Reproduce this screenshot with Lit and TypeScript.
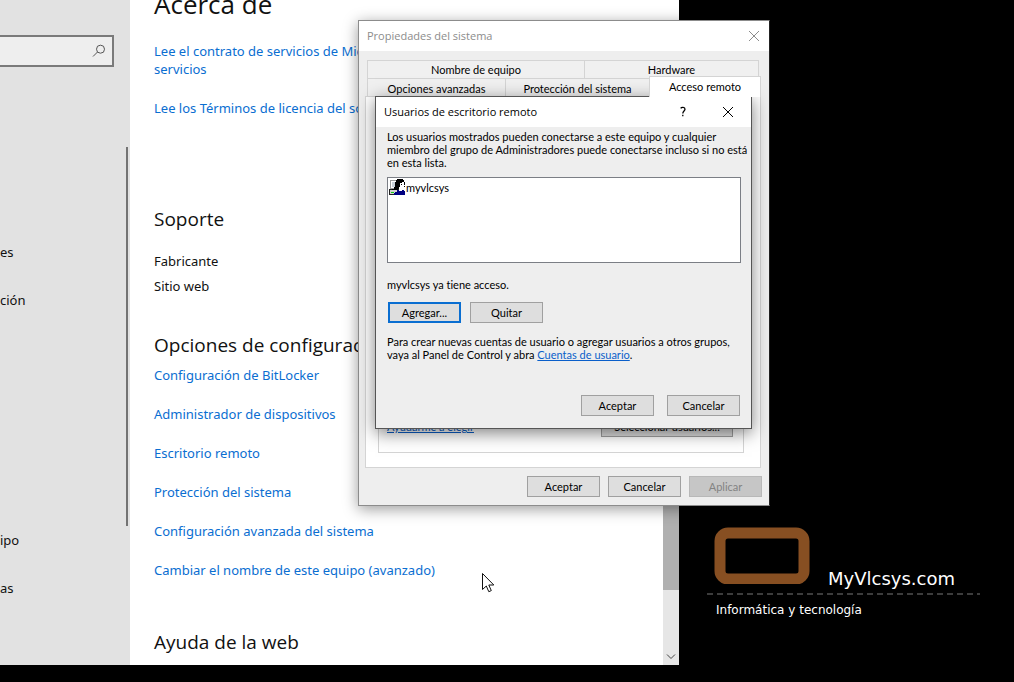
import { LitElement, html, css } from "lit";
import { customElement } from "lit/decorators.js";

const settingLinks = [
  "Configuración de BitLocker",
  "Administrador de dispositivos",
  "Escritorio remoto",
  "Protección del sistema",
  "Configuración avanzada del sistema",
  "Cambiar el nombre de este equipo (avanzado)",
];

@customElement("settings-window")
class SettingsWindow extends LitElement {
  static styles = css`
    :host {
      display: grid;
      grid-template-columns: 130px 1fr 16px;
      overflow: hidden;
      background: #fff;
      color: #111;
      font: 13px/18px "Noto Sans", "Open Sans", sans-serif;
    }
    .side {
      display: flex;
      flex-direction: column;
      position: relative;
      background: #e2e2e2;
      padding-top: 51px;
    }
    .search {
      display: flex;
      align-items: center;
      box-sizing: border-box;
      height: 32px;
      margin-right: 16px;
      border: 2px solid #7a7a7a;
      border-left: 0;
      background: #eee;
    }
    .search input {
      flex: 1;
      min-width: 0;
      border: 0;
      outline: 0;
      background: transparent;
    }
    .search svg {
      margin-right: 6px;
    }
    .nav {
      display: flex;
      flex-direction: column;
      gap: 30px;
      margin-top: 176px;
    }
    .nav + .nav {
      margin-top: 222px;
    }
    .nav a {
      color: #111;
      text-decoration: none;
    }
    .thumb {
      position: absolute;
      right: 2px;
      top: 163px;
      width: 2px;
      height: 379px;
      background: #737373;
    }
    .main {
      padding-left: 24px;
      white-space: nowrap;
      overflow: hidden;
    }
    .main a {
      color: #0a6ed1;
      text-decoration: none;
    }
    h1 {
      margin: 0 0 18px;
      font: 400 26px/40px "Open Sans", "Noto Sans", sans-serif;
    }
    h2 {
      margin: 0;
      font: 400 19px/28px "Open Sans", "Noto Sans", sans-serif;
    }
    .legal {
      display: flex;
      flex-direction: column;
      align-items: start;
      gap: 21px;
      margin-bottom: 88px;
    }
    .facts {
      display: flex;
      flex-direction: column;
      gap: 7px;
      margin: 19px 0 36px;
    }
    .links {
      display: flex;
      flex-direction: column;
      align-items: start;
      gap: 21px;
      margin: 7px 0 49px;
    }
    .bar {
      display: flex;
      flex-direction: column;
      justify-content: flex-end;
      background: #e6e6e6;
    }
    .bar .grip {
      height: 200px;
      background: #b0b0b0;
    }
    .bar .down {
      height: 75px;
      display: flex;
      align-items: flex-end;
      justify-content: center;
    }
    .track {
      flex: 1;
      background: #fff;
    }
  `;
  render() {
    return html`
      <nav class="side">
        <label class="search">
          <input type="search" aria-label="Buscar" />
          <svg width="14" height="14" viewBox="0 0 14 14" fill="none" stroke="#555" stroke-width="1">
            <circle cx="8.5" cy="5.2" r="4" />
            <path d="M5.5 8 L1 12.5" />
          </svg>
        </label>
        <div class="nav"><a href="#">es</a><a href="#">ción</a></div>
        <div class="nav"><a href="#">ipo</a><a href="#">as</a></div>
        <div class="thumb"></div>
      </nav>
      <main class="main">
        <h1>Acerca de</h1>
        <div class="legal">
          <a href="#">Lee el contrato de servicios de Microsoft<br />servicios</a>
          <a href="#">Lee los Términos de licencia del software</a>
        </div>
        <h2>Soporte</h2>
        <div class="facts"><span>Fabricante</span><span>Sitio web</span></div>
        <h2>Opciones de configuración</h2>
        <div class="links">${settingLinks.map((t) => html`<a href="#">${t}</a>`)}</div>
        <h2>Ayuda de la web</h2>
      </main>
      <div class="bar">
        <div class="track"></div>
        <div class="grip"></div>
        <div class="down">
          <svg width="10" height="16" viewBox="0 0 10 16" fill="none" stroke="#444"><path d="M1 5.5 L5 9.5 L9 5.5" /></svg>
        </div>
      </div>
    `;
  }
}

const dialogStyles = css`
  :host {
    display: flex;
    flex-direction: column;
    box-sizing: border-box;
    background: #eee;
    color: #000;
    font: 11px/13px Lato, "Liberation Sans", Arial, sans-serif;
    font-variant-ligatures: none;
    white-space: nowrap;
  }
  header {
    display: flex;
    align-items: center;
    box-sizing: border-box;
    height: 30px;
    flex: none;
    background: #fff;
    font: 11px/16px "Open Sans", "Noto Sans", sans-serif;
    padding: 0 9px 0 8px;
  }
  header .title {
    flex: 1;
  }
  header button {
    display: flex;
    justify-content: center;
    align-items: center;
    padding: 0;
    border: 0;
    background: none;
    color: inherit;
    font: inherit;
  }
  .btn {
    box-sizing: border-box;
    width: 73px;
    height: 21px;
    padding: 0;
    border: 1px solid #a0a0a0;
    background: #dedede;
    color: #000;
    font: inherit;
    font-variant-ligatures: none;
  }
  .btn.default {
    border: 2px solid #0a6ed1;
  }
  .btn:disabled {
    background: #c6c6c6;
    border-color: #b8b8b8;
    color: #838383;
  }
  a {
    color: #0a5fca;
  }
`;

@customElement("system-properties")
class SystemProperties extends LitElement {
  static styles = [
    dialogStyles,
    css`
      header {
        color: #8c8c8c;
      }
      .tabs {
        display: grid;
        grid-template-columns: 138fr 144fr 110fr;
        height: 18px;
        margin: 0 10px 0 8px;
      }
      .tabs.first {
        grid-template-columns: 217fr 175fr;
        margin-top: 9px;
      }
      .tab {
        box-sizing: border-box;
        padding: 0;
        border: 1px solid #d4d4d4;
        border-width: 1px 0 0 1px;
        background: #f0f0f0;
        font: inherit;
        color: inherit;
      }
      .first .tab:last-child {
        border-right-width: 1px;
      }
      .tab.selected {
        height: 21px;
        margin: -2px -2px 0 0;
        padding-bottom: 2px;
        background: #fff;
        border-right-width: 1px;
        z-index: 1;
      }
      .panel {
        box-sizing: border-box;
        display: flex;
        flex-direction: column;
        flex: 1;
        margin: 0 8px 0 6px;
        padding: 12px 16px 14px 12px;
        border: 1px solid #d4d4d4;
        background: #fff;
      }
      .group {
        display: flex;
        flex: 1;
        align-items: flex-end;
        justify-content: space-between;
        padding: 0 10px 15px 8px;
        border: 1px solid #d4d4d4;
      }
      .group a {
        margin-bottom: 4px;
      }
      .group .btn {
        width: 132px;
      }
      .actions {
        display: flex;
        justify-content: flex-end;
        gap: 8px;
        padding: 8px 7px;
      }
    `,
  ];
  render() {
    return html`
      <header>
        <span class="title">Propiedades del sistema</span>
        <button aria-label="Cerrar">
          <svg width="12" height="12" viewBox="0 0 12 12" stroke="#8c8c8c"><path d="M1 1 L11 11 M11 1 L1 11" /></svg>
        </button>
      </header>
      <div class="tabs first" role="tablist">
        <button class="tab" role="tab">Nombre de equipo</button>
        <button class="tab" role="tab">Hardware</button>
      </div>
      <div class="tabs" role="tablist">
        <button class="tab" role="tab">Opciones avanzadas</button>
        <button class="tab" role="tab">Protección del sistema</button>
        <button class="tab selected" role="tab" aria-selected="true">Acceso remoto</button>
      </div>
      <div class="panel">
        <div class="group">
          <a href="#">Ayudarme a elegir</a>
          <button class="btn">Seleccionar usuarios...</button>
        </div>
      </div>
      <div class="actions">
        <button class="btn">Aceptar</button>
        <button class="btn">Cancelar</button>
        <button class="btn" disabled>Aplicar</button>
      </div>
    `;
  }
}

@customElement("remote-users")
class RemoteUsers extends LitElement {
  static styles = [
    dialogStyles,
    css`
      header {
        gap: 35px;
        padding-right: 17px;
      }
      .body {
        display: flex;
        flex-direction: column;
        flex: 1;
        padding: 3px 10px 12px 11px;
      }
      p {
        margin: 0;
      }
      ul {
        box-sizing: border-box;
        height: 86px;
        margin: 8px 0 15px;
        padding: 1px;
        border: 1px solid #7b7e85;
        background: #fff;
        list-style: none;
      }
      li {
        display: flex;
        align-items: center;
        gap: 1px;
      }
      .row {
        display: flex;
        gap: 9px;
        margin: 11px 0 12px 1px;
      }
      .actions {
        display: flex;
        justify-content: flex-end;
        gap: 13px;
        margin-top: auto;
        padding-right: 1px;
      }
    `,
  ];
  render() {
    return html`
      <header>
        <span class="title">Usuarios de escritorio remoto</span>
        <button aria-label="Ayuda">
          <svg width="8" height="12" viewBox="0 0 8 12" fill="none" stroke="#000" stroke-width="1.3">
            <path d="M1.7 2.4 C2.4 1 6 .9 6 3.2 C6 5 3.8 5 3.8 7.4 M3.8 8.8 V10.3" />
          </svg>
        </button>
        <button aria-label="Cerrar">
          <svg width="12" height="12" viewBox="0 0 12 12" stroke="#000" stroke-width="1"><path d="M1 1 L11 11 M11 1 L1 11" /></svg>
        </button>
      </header>
      <div class="body">
        <p>
          Los usuarios mostrados pueden conectarse a este equipo y cualquier<br />
          miembro del grupo de Administradores puede conectarse incluso si no está<br />
          en esta lista.
        </p>
        <ul>
          <li>
            <svg width="16" height="16" viewBox="0 0 16 16" shape-rendering="crispEdges">
              <path d="M1 1 H9 V10 H1 Z" fill="#999" />
              <path d="M2 2 H8 V9 H2 Z" fill="#fff" />
              <path d="M3 3 H8 V8 H3 Z" fill="#c8d0d8" />
              <path d="M0 10 H10 V16 H0 Z" fill="#222" />
              <path d="M1 11 H9 V15 H1 Z" fill="#d0d0d0" />
              <path d="M2 13 H5 V14 H2 Z" fill="#10d010" />
              <path d="M8 0 H14 V1 H15 V3 H16 V8 H12 V10 H9 V11 H3 V10 H5 V8 H6 V3 H7 V1 H8 Z" fill="#000" />
              <path d="M11 4 H13 V3 H15 V6 H16 V7 H15 V10 H13 V11 H10 V8 H11 Z" fill="#fff" />
              <path d="M12 5 H13 V6 H12 Z" fill="#000" />
              <path d="M6 13 H8 V11 H10 V12 H13 V11 H15 V12 H16 V16 H5 V14 H6 Z" fill="#000080" />
            </svg>
            <span>myvlcsys</span>
          </li>
        </ul>
        <p>myvlcsys ya tiene acceso.</p>
        <div class="row">
          <button class="btn default">Agregar...</button>
          <button class="btn">Quitar</button>
        </div>
        <p>
          Para crear nuevas cuentas de usuario o agregar usuarios a otros grupos,<br />
          vaya al Panel de Control y abra <a href="#">Cuentas de usuario</a>.
        </p>
        <div class="actions">
          <button class="btn">Aceptar</button>
          <button class="btn">Cancelar</button>
        </div>
      </div>
    `;
  }
}

@customElement("app-root")
class AppRoot extends LitElement {
  static styles = css`
    :host {
      display: block;
      position: relative;
      height: 100vh;
      overflow: hidden;
      background: #000;
    }
    .settings {
      position: absolute;
      left: 0;
      top: -16px;
      bottom: 17px;
      width: 679px;
    }
    .properties {
      position: absolute;
      left: 358px;
      top: 20px;
      width: 412px;
      height: 486px;
      border: 1px solid #8c8c8c;
      border-right-color: #222;
      box-shadow: 0 3px 14px rgba(0, 0, 0, 0.4);
    }
    .users {
      position: absolute;
      left: 375px;
      top: 96px;
      width: 377px;
      height: 333px;
      border: 1px solid #555;
      box-shadow: 0 4px 16px rgba(0, 0, 0, 0.5);
    }
    .brand {
      position: absolute;
      left: 707px;
      top: 527px;
      width: 273px;
      color: #fff;
      font: 12px/14px "DejaVu Sans", Verdana, sans-serif;
    }
    .logo {
      display: flex;
      align-items: flex-end;
      gap: 18px;
      padding: 0 0 9px 7px;
    }
    .name {
      font-size: 18px;
      line-height: 20px;
      margin-bottom: -5px;
    }
    .dash {
      display: block;
    }
    .tag {
      margin: 8px 0 0 9px;
    }
    .cursor {
      position: absolute;
      left: 482px;
      top: 573px;
    }
  `;
  render() {
    return html`
      <div class="brand">
        <div class="logo">
          <svg width="96" height="57" viewBox="0 0 96 57">
            <rect x="6" y="6" width="84" height="46" rx="8" fill="none" stroke="#874f22" stroke-width="11" />
          </svg>
          <span class="name">MyVlcsys.com</span>
        </div>
        <svg class="dash" width="100%" height="2"><path d="M0 1 H273" stroke="#3c3c3c" stroke-width="2" stroke-dasharray="6 4" /></svg>
        <div class="tag">Informática y tecnología</div>
      </div>
      <settings-window class="settings"></settings-window>
      <system-properties class="properties"></system-properties>
      <remote-users class="users"></remote-users>
      <svg class="cursor" width="13" height="20" viewBox="0 0 13 20">
        <path d="M.5 .5 V16.5 L4.3 13 L6.8 18.7 L9.3 17.6 L6.8 12 H11.8 Z" fill="#fff" stroke="#111" />
      </svg>
    `;
  }
}
